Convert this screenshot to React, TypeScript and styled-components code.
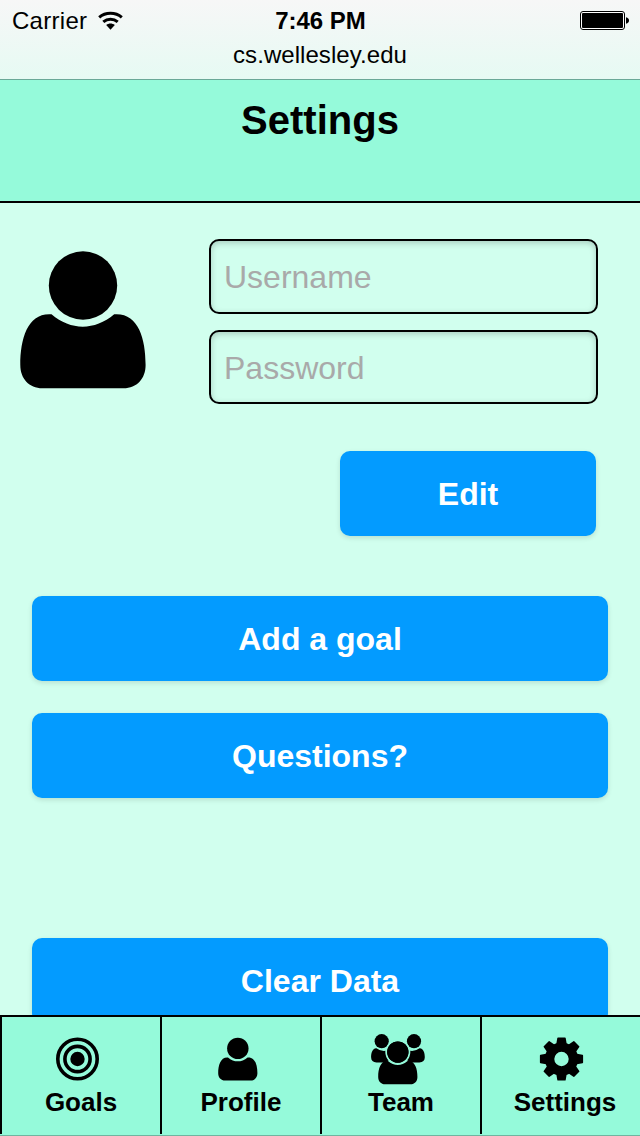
import React from "react";
import styled, { createGlobalStyle } from "styled-components";

const GlobalStyle = createGlobalStyle`
  * { box-sizing: border-box; }
  html, body { margin: 0; padding: 0; }
  body { background: #d1ffee; color: #000; font-family: "Liberation Sans", Helvetica, Arial, sans-serif; }
`;

const Screen = styled.div`
  width: 640px;
  height: 1136px;
  display: flex;
  flex-direction: column;
  overflow: hidden;
  background: #d1ffee;
`;

const BrowserBar = styled.div`
  flex: none;
  height: 80px;
  border-bottom: 1px solid #6aa897;
  background: linear-gradient(#f7f7f7, #e6faf3);
`;

const StatusRow = styled.div`
  height: 41px;
  padding: 0 11px 0 12px;
  display: grid;
  grid-template-columns: 1fr auto 1fr;
  align-items: center;
  font-size: 24px;
  line-height: 40px;
`;

const Carrier = styled.div`
  display: flex;
  align-items: center;
  gap: 11px;
  letter-spacing: 0.28px;
`;

const Drawing = styled.svg`
  display: block;
  flex: none;
  overflow: visible;
`;

const Clock = styled.div`
  font-weight: 700;
  font-size: 24px;
`;

const BatterySlot = styled.div`
  display: flex;
  justify-content: flex-end;
`;

const Address = styled.div`
  text-align: center;
  font-size: 24px;
  line-height: 28px;
  letter-spacing: 0.06px;
`;

const Header = styled.header`
  flex: none;
  height: 123px;
  padding-top: 17px;
  background: #95fada;
  border-bottom: 2px solid #000;
`;

const Title = styled.h1`
  margin: 0;
  text-align: center;
  font-size: 40px;
  line-height: 46px;
`;

const Main = styled.main`
  flex: 1;
  min-height: 0;
  overflow: hidden;
  padding: 36px 32px 0;
`;

const Account = styled.section`
  display: flex;
  justify-content: space-between;
  margin: 0 10px 0 -12px;
`;

const Avatar = styled.div`
  padding-top: 12px;
`;

const Fields = styled.div`
  width: 389px;
  display: flex;
  flex-direction: column;
  gap: 16px;
`;

const Field = styled.input<{ $height: number }>`
  width: 100%;
  height: ${(p) => p.$height}px;
  padding: 2px 13px 0;
  border: 2px solid #000;
  border-radius: 10px;
  outline: none;
  background: transparent;
  box-shadow: inset 0 2px 6px rgba(0, 0, 0, 0.2);
  font: 32px "Liberation Sans", Helvetica, Arial, sans-serif;
  &::placeholder { color: #a9a9a9; opacity: 1; }
`;

const Button = styled.button<{ $top: number; $compact?: boolean }>`
  display: block;
  width: ${(p) => (p.$compact ? "256px" : "100%")};
  height: 85px;
  margin: ${(p) => p.$top}px ${(p) => (p.$compact ? "12px" : "0")} 0 auto;
  padding: 2px 0 0;
  border: 0;
  border-radius: 10px;
  background: #039bff;
  color: #fff;
  box-shadow: 0 2px 5px rgba(0, 0, 0, 0.12);
  font: bold 32px "Liberation Sans", Helvetica, Arial, sans-serif;
`;

const TabBar = styled.nav`
  flex: none;
  height: 121px;
  display: grid;
  grid-template-columns: repeat(4, 160px);
  grid-template-rows: 117px;
  border-top: 2px solid #000;
  border-bottom: 1px solid #6fb5a0;
  background: #95fada;
`;

const Tab = styled.a`
  border-left: 2px solid #000;
  padding-top: 16px;
  display: flex;
  flex-direction: column;
  align-items: center;
  font-weight: 700;
  font-size: 26px;
  line-height: 30px;
`;

const SettingsTab = styled(Tab)`
  padding-left: 8px;
`;

const Glyph = styled.svg`
  display: block;
  width: 56px;
  height: 54px;
  flex: none;
  overflow: visible;
`;

const BODY =
  "M31.5 63.3C51 79.8 74.5 79.8 94.2 63.3C118 61.5 125.6 87 125.6 114C125.6 127.5 117 137.3 103.5 137.3H22.5C9 137.3 .3 127.500 .3 114C.3 87 8 61.5 31.5 63.3Z";

const PersonShape = () => (
  <>
    <circle cx="63" cy="34.5" r="34.2" />
    <path d={BODY} />
  </>
);

const GoalsIcon = () => (
  <Glyph viewBox="0 0 56 54">
    <g fill="none" stroke="#000" strokeWidth="3.6">
      <circle cx="24.5" cy="26" r="19.7" />
      <circle cx="24.5" cy="26" r="12.6" />
    </g>
    <circle cx="24.5" cy="26" r="7.2" />
  </Glyph>
);

const ProfileIcon = () => (
  <Glyph viewBox="0 0 56 54">
    <g transform="translate(5.1 4.6) scale(.313)">
      <PersonShape />
    </g>
  </Glyph>
);

const SIDE =
  "M3.4 15.2Q9 19.400 14.500 17.300C14.500 21.500 16.500 24.500 19 26.500C16 26.800 14 28 12.800 29.400H3.500C0 29.400-1.900 27.500-1.900 24.300C-1.900 20.500-.8 15 3.400 15.200Z";

const TeamIcon = () => (
  <Glyph viewBox="0 0 56 54">
    <circle cx="8.7" cy="8.2" r="7.1" />
    <circle cx="41" cy="8.2" r="7.1" />
    <path d={SIDE} />
    <path d={SIDE} transform="translate(49.9 0) scale(-1 1)" />
    <g stroke="#95fada" strokeWidth="6" transform="translate(5.1 8.3) scale(.313)">
      <circle cx="63" cy="34.5" r="37" />
    </g>
    <g transform="translate(5.1 8.3) scale(.313)">
      <PersonShape />
    </g>
  </Glyph>
);

const TOOTH = "M-5.4-14L-4.2-21Q-4.1-21.6-3.5-21.6H3.5Q4.1-21.6 4.2-21L5.4-14Z";

const SettingsIcon = () => (
  <Glyph viewBox="0 0 56 54">
    <g transform="translate(24.5 26)">
      {[0, 45, 90, 135, 180, 225, 270, 315].map((a) => (
        <path key={a} d={TOOTH} transform={`rotate(${a})`} />
      ))}
      <circle r="11.9" fill="none" stroke="#000" strokeWidth="9.4" />
    </g>
  </Glyph>
);

export default function App() {
  return (
    <>
      <GlobalStyle />
      <Screen>
        <BrowserBar>
          <StatusRow>
            <Carrier>
              <span>Carrier</span>
              <Drawing width="25" height="18" viewBox="0 0 25 18">
                <g fill="none" stroke="#000" strokeWidth="3">
                  <path d="M1.2 5.4C7.5-.1 17.5-.1 23.8 5.4" />
                  <path d="M5.3 9.9C9.5 6.2 15.5 6.2 19.7 9.9" />
                </g>
                <path d="M8.2 12.9C10.8 10.9 14.2 10.9 16.8 12.9L12.5 17.8Z" />
              </Drawing>
            </Carrier>
            <Clock>7:46 PM</Clock>
            <BatterySlot>
              <Drawing width="49" height="19" viewBox="0 0 49 19">
                <rect x=".5" y=".5" width="44" height="18" rx="2.5" fill="#fff" stroke="#000" />
                <rect x="2" y="2" width="41" height="15" rx="1" />
                <path d="M46 6.3Q49 7 49 9.5T46 12.7Z" />
              </Drawing>
            </BatterySlot>
          </StatusRow>
          <Address>cs.wellesley.edu</Address>
        </BrowserBar>
        <Header>
          <Title>Settings</Title>
        </Header>
        <Main>
          <Account>
            <Avatar>
              <Drawing width="126" height="138" viewBox="0 0 126 138">
                <PersonShape />
              </Drawing>
            </Avatar>
            <Fields>
              <Field $height={75} placeholder="Username" />
              <Field $height={74} type="password" placeholder="Password" />
            </Fields>
          </Account>
          <Button $top={47} $compact>Edit</Button>
          <Button $top={60}>Add a goal</Button>
          <Button $top={32}>Questions?</Button>
          <Button $top={140}>Clear Data</Button>
        </Main>
        <TabBar>
          <Tab><GoalsIcon />Goals</Tab>
          <Tab><ProfileIcon />Profile</Tab>
          <Tab><TeamIcon />Team</Tab>
          <SettingsTab><SettingsIcon />Settings</SettingsTab>
        </TabBar>
      </Screen>
    </>
  );
}
